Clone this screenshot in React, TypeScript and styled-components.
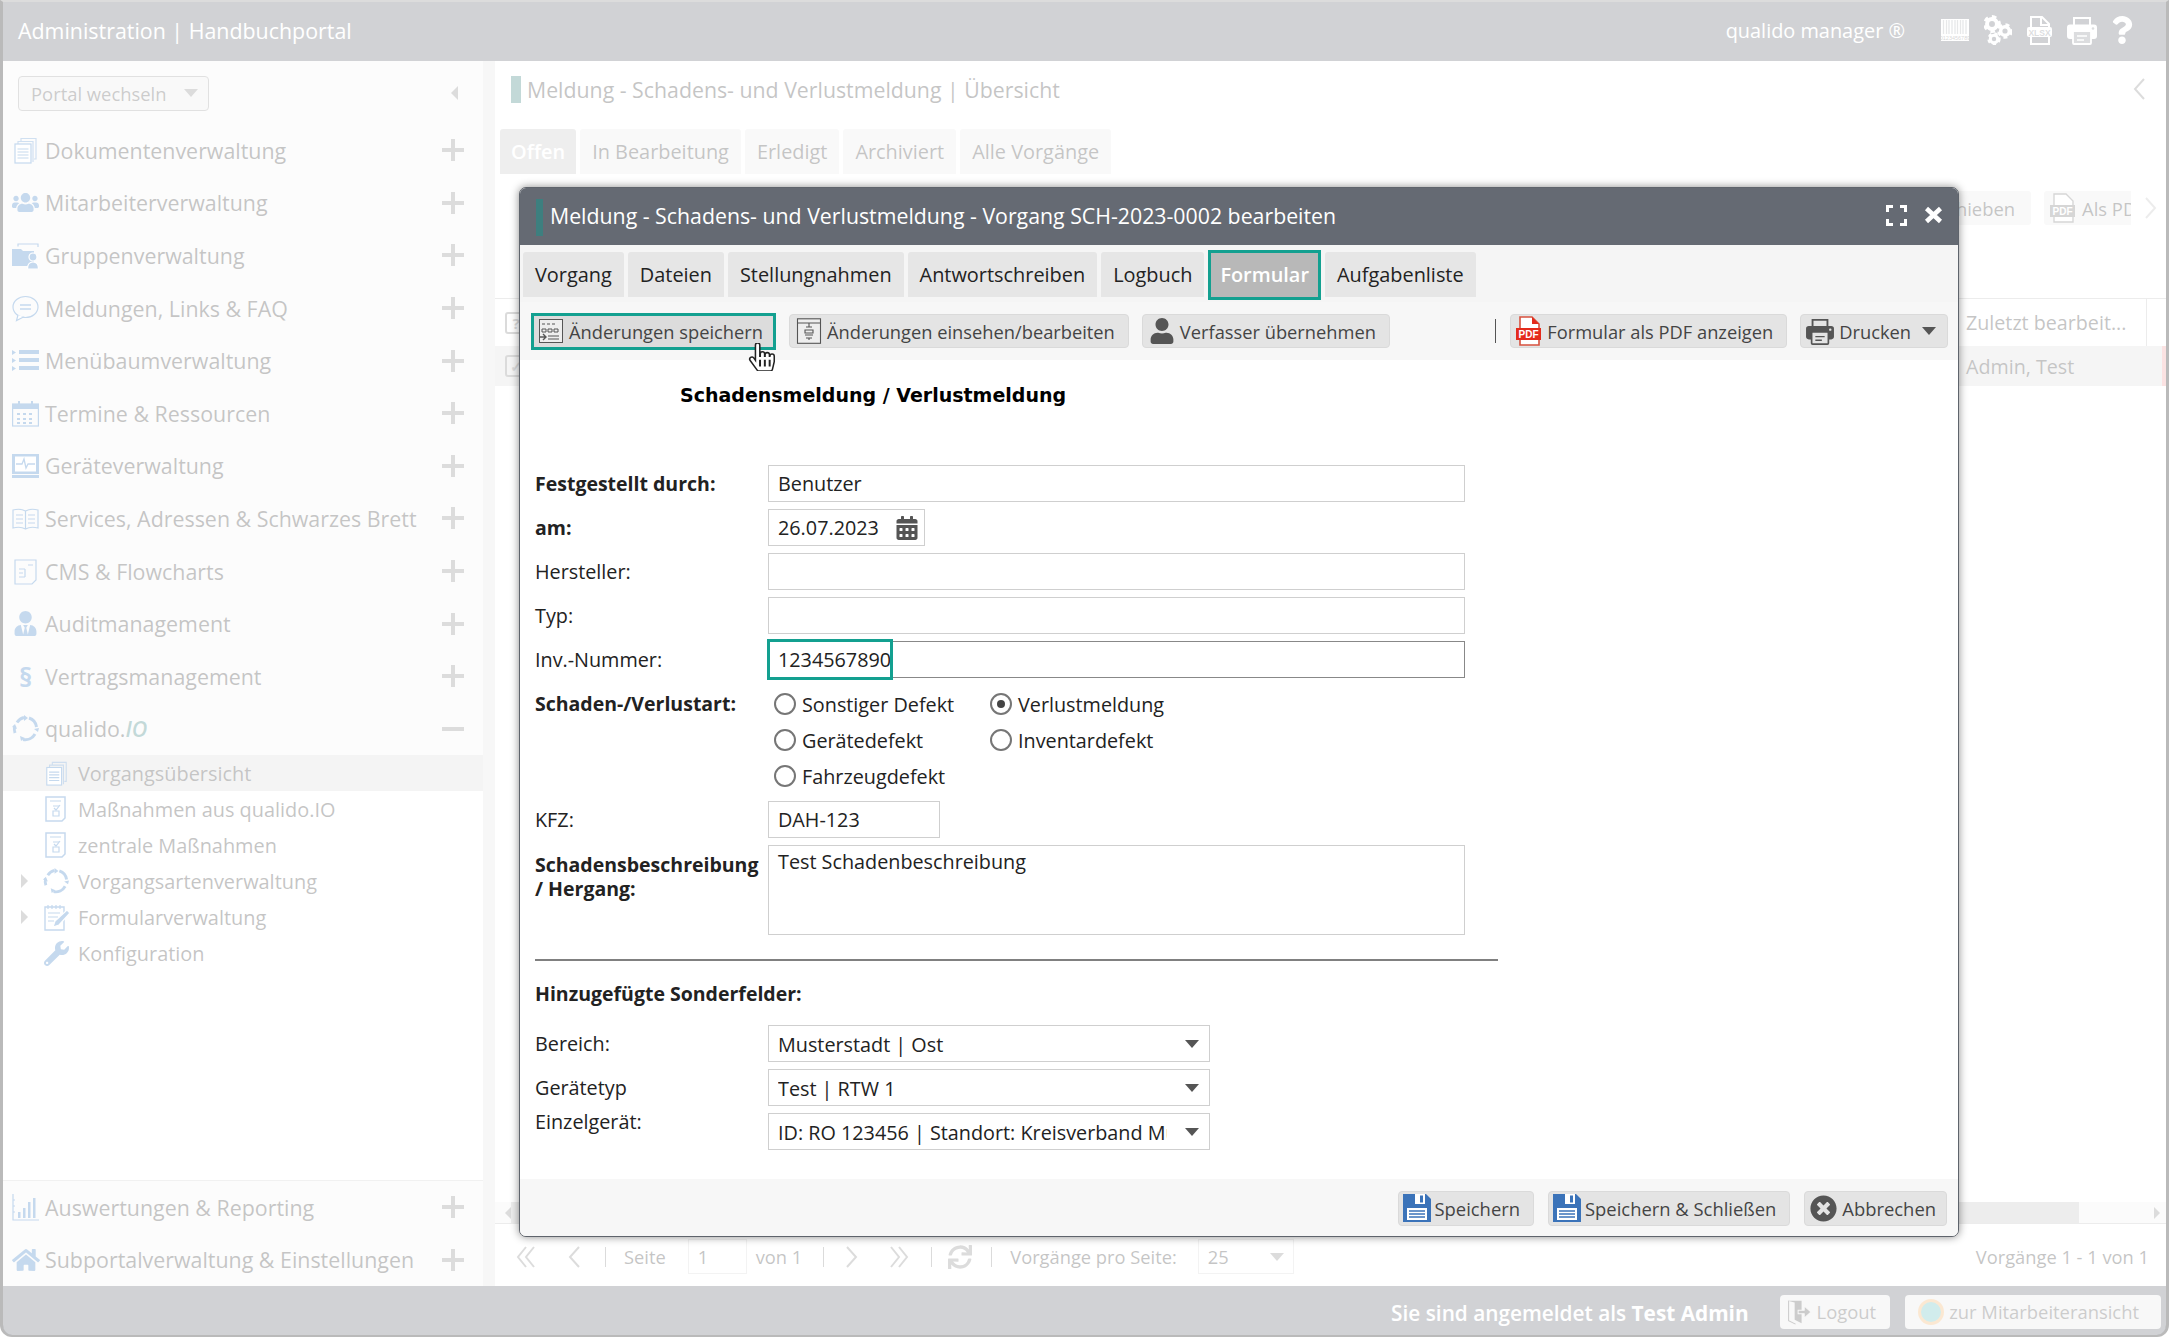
import React from "react";
import styled, { createGlobalStyle } from "styled-components";
import { FaUsers, FaUserTie, FaHome, FaWrench, FaQuestion, FaCalendarAlt, FaUser, FaTimesCircle, FaSync, FaHandPointer } from "react-icons/fa";

const Global = createGlobalStyle`
  html, body { margin: 0; padding: 0; width: 2169px; height: 1337px; overflow: hidden; background: #fff; }
  body { font-family: "Open Sans", "Liberation Sans", sans-serif; color: #3c3c3c; }
  * { box-sizing: border-box; }
  svg { flex: none; }
  #root { width: 2169px; height: 1337px; }
`;

const BLUE = "#3f80c6";

const Frame = styled.div`
  position: relative; width: 2169px; height: 1337px; display: flex; flex-direction: column;
  border: solid #bababa; border-width: 2px 3px 2px 3px; border-top-color: #dcdcdc;
  border-radius: 0 0 12px 12px; overflow: hidden; background: #fff;
`;
const Dim = styled.div`position: absolute; inset: 0; background: rgba(255,255,255,.7); z-index: 10;`;

const TopBar = styled.header`
  height: 59px; flex: none; background: #656a73; color: #fff; display: flex; align-items: center; padding: 0 30px 3px 15px; font-size: 21.4px;
`;
const TopTitle = styled.div`flex: 1;`;
const TopBrand = styled.div`font-size: 19.9px; margin-right: 36px;`;
const TopIcons = styled.div`display: flex; align-items: center; gap: 15px; color: #fff;`;
const TopHelp = styled.span`display: flex; margin-left: -4px;`;

const Body = styled.div`flex: 1; display: flex; min-height: 0;`;

const Sidebar = styled.aside`width: 480px; flex: none; display: flex; flex-direction: column; background: #fff;`;
const SideTop = styled.div`background: #f5f5f5; flex: none;`;
const PortalRow = styled.div`height: 63px; display: flex; align-items: flex-start; justify-content: space-between; padding: 15px 25px 0 15px;`;
const PortalSelect = styled.div`
  width: 191px; height: 35px; border: 1px solid #9c9c9c; border-radius: 4px; background: #ececec; display: flex; align-items: center;
  justify-content: space-between; padding: 0 10px 1px 12px; font-size: 18.4px; color: #555;
`;
const TriDown = styled.span<{ $c?: string; $w?: number }>`
  display: inline-block; width: 0; height: 0; flex: none;
  border-left: ${p => p.$w ?? 7}px solid transparent; border-right: ${p => p.$w ?? 7}px solid transparent;
  border-top: ${p => (p.$w ?? 7) + 1}px solid ${p => p.$c ?? "#555"};
`;
const TriSide = styled.span<{ $dir: "l" | "r"; $c?: string; $h?: number }>`
  display: inline-block; width: 0; height: 0; flex: none;
  border-top: ${p => p.$h ?? 7}px solid transparent; border-bottom: ${p => p.$h ?? 7}px solid transparent;
  ${p => (p.$dir === "l" ? "border-right" : "border-left")}: ${p => p.$h ?? 7}px solid ${p => p.$c ?? "#8a8a8a"};
`;
const CollapseMark = styled.div`margin-top: 7px;`;

const MenuRow = styled.div`
  height: 52.6px; display: flex; align-items: center; padding: 0 19px 0 9px; font-size: 21.4px; color: #3c3c3c; white-space: nowrap;
`;
const MenuIcon = styled.span`width: 27px; height: 27px; flex: none; display: flex; align-items: center; justify-content: center; color: ${BLUE}; margin-right: 6px;`;
const ParaGlyph = styled.span`font-size: 27px; font-weight: 700; color: ${BLUE}; line-height: 27px;`;
const Ital = styled.i`color: #37807d; font-weight: 600;`;
const Expander = styled.span`margin-left: auto; width: 22px; height: 22px; position: relative; flex: none; color: #8a8a8a;
  &::before { content: ""; position: absolute; left: 0; right: 0; top: 9px; height: 4px; background: currentColor; }
`;
const ExpanderPlus = styled(Expander)`
  &::after { content: ""; position: absolute; top: 0; bottom: 0; left: 9px; width: 4px; background: currentColor; }
`;

const SubInner = styled.div`background: #fff;`;
const SubRow = styled.div<{ $sel?: boolean }>`
  height: 36px; display: flex; align-items: center; font-size: 19.9px; padding-left: 18px; color: #3c3c3c; background: ${p => (p.$sel ? "#dadada" : "#fff")};
`;
const SubCaret = styled.span`width: 21px; flex: none; display: flex;`;
const SubIcon = styled.span`width: 28px; height: 26px; flex: none; display: flex; align-items: center; justify-content: center; color: ${BLUE}; margin-right: 8px;`;

const SideSpacer = styled.div`flex: 1;`;
const SideBottom = styled.div`flex: none; background: #f5f5f5; border-top: 1px solid #d0d0d0;`;

const Splitter = styled.div`width: 12px; flex: none; background: #e4e4e4;`;

const Main = styled.main`flex: 1; min-width: 0; display: flex; flex-direction: column; background: #fff;`;
const TitleRow = styled.div`height: 68px; flex: none; display: flex; align-items: center; padding: 0 20px 12px 16px; font-size: 21.3px; color: #3c3c3c;`;
const TitleAccent = styled.span`width: 10px; height: 27px; background: #37807d; margin-right: 6px; flex: none;`;
const TitleText = styled.span`flex: 1;`;
const BackTabs = styled.div`display: flex; gap: 4px; padding-left: 5px; height: 45px; flex: none;`;
const BackTab = styled.div<{ $on?: boolean }>`
  padding: 0 ${p => (p.$on ? 11 : 12)}px; display: flex; align-items: center; font-size: 19.9px; font-weight: ${p => (p.$on ? 600 : 400)};
  color: ${p => (p.$on ? "#fff" : "#3c3c3c")}; background: ${p => (p.$on ? "#c6c6c6" : "#ebebeb")}; border-radius: 3px 3px 0 0;
`;
const BackActions = styled.div`margin-top: 17px; height: 34px; flex: none; display: flex; justify-content: flex-end; align-items: center; gap: 13px; padding-right: 8px;`;
const BackBtn = styled.div`height: 34px; width: max-content; flex: none; display: flex; align-items: center; gap: 6px; padding: 0 16px 0 6px; background: #ebebeb; font-size: 18.4px; color: #3c3c3c; border-radius: 3px; white-space: nowrap;`;
const BackClip = styled.div`width: 87px; overflow: hidden; flex: none;`;
const BackNext = styled.span`width: 14px; display: flex; color: #c0c0c0;`;
const THead = styled.div`margin-top: 73px; height: 48px; flex: none; display: flex; align-items: center; border-top: 1px solid #c0c0c0; padding-left: 10px; font-size: 19.7px;`;
const TRow = styled.div`height: 40px; flex: none; display: flex; align-items: center; background: #dedede; padding-left: 10px; font-size: 19.7px;`;
const CheckBox = styled.span`width: 22px; height: 22px; border: 2px solid #888; border-radius: 3px; color: #888; font-size: 15px; font-weight: 700; display: flex; align-items: center; justify-content: center; flex: none;`;
const LastCell = styled.div`margin-left: auto; width: 200px; height: 100%; display: flex; align-items: center; white-space: nowrap; position: relative;`;
const CellRule = styled.span`position: absolute; top: 0; bottom: 0; left: 180px; width: 1px; background: #c0c0c0;`;
const PinkMark = styled.span`position: absolute; top: 0; bottom: 0; right: 0; width: 4px; background: #f19e9e;`;
const BackSpacer = styled.div`flex: 1;`;
const HScroll = styled.div`height: 22px; flex: none; display: flex; align-items: center; background: #f0f0f0; border-bottom: 1px solid #c0c0c0; padding: 0 6px 0 10px;`;
const HScrollThumb = styled.div`height: 21px; width: 1568px; background: #c4c4c4; flex: none;`;
const Pager = styled.div`height: 62px; flex: none; display: flex; align-items: center; padding: 3px 17px 0 21px; font-size: 18.3px; color: #3c3c3c; white-space: nowrap;`;
const PagerIco = styled.span<{ $ml?: number }>`display: flex; margin-left: ${p => p.$ml ?? 0}px; color: #8a8a8a; flex: none;`;
const PagerSep = styled.span<{ $ml: number }>`width: 1px; height: 20px; background: #888; margin-left: ${p => p.$ml}px; flex: none;`;
const PagerTxt = styled.span<{ $ml: number }>`margin-left: ${p => p.$ml}px;`;
const PagerField = styled.div<{ $ml: number; $w: number }>`
  margin-left: ${p => p.$ml}px; width: ${p => p.$w}px; height: 35px; border: 1px solid #d6d6d6; background: #fff; display: flex; align-items: center; justify-content: space-between; padding: 0 9px; flex: none;
`;
const PagerRight = styled.span`margin-left: auto;`;

const BottomBar = styled.footer`
  height: 49px; flex: none; background: #656a73; color: #fff; display: flex; align-items: center; justify-content: flex-end; padding: 2px 5px 0 0; font-size: 20.8px; font-weight: 600;
`;
const BottomMsg = styled.span`margin-top: 2px;`;
const BottomStrong = styled.b`font-weight: 700;`;
const BottomBtn = styled.div<{ $ml: number; $pl: number; $pr: number }>`
  height: 34px; margin-left: ${p => p.$ml}px; background: #e6e6e6; border-radius: 4px; display: flex; align-items: center; gap: 5px; padding: 0 ${p => p.$pr}px 0 ${p => p.$pl}px; font-size: 18.4px; font-weight: 400; color: #555;
`;
const StatusDot = styled.span`width: 26px; height: 26px; border-radius: 50%; border: 3px solid #f2b36a; background: #64c0c0; flex: none;`;

/* Modal */
const Modal = styled.section`
  position: absolute; left: 516px; top: 185px; width: 1440px; height: 1050px; z-index: 20; background: #fff; display: flex; flex-direction: column;
  border-radius: 7px; border: 1px solid #5f646c; box-shadow: 0 0 9px rgba(0,0,0,.45); overflow: hidden; color: #222;
`;
const ModalHead = styled.div`height: 57px; flex: none; background: #656a73; color: #fff; display: flex; align-items: center; padding: 0 15px 0 16px; font-size: 21.3px;`;
const HeadAccent = styled.span`width: 7px; height: 37px; background: #3d7f7f; margin-right: 7px; flex: none; margin-top: 1px;`;
const HeadTitle = styled.span`flex: 1; font-weight: 500; margin-bottom: 3px;`;
const HeadTools = styled.div`display: flex; align-items: center; gap: 17px; margin-bottom: 3px;`;
const ModalTabs = styled.div`height: 57px; flex: none; background: #f5f5f5; display: flex; align-items: center; gap: 4px; padding: 2px 0 0 3px;`;
const ModalTab = styled.div<{ $on?: boolean }>`
  height: ${p => (p.$on ? 50 : 45)}px; padding: 0 ${p => (p.$on ? 9 : 12)}px; display: flex; align-items: center; font-size: 19.9px; white-space: nowrap;
  background: ${p => (p.$on ? "#b8b8b8" : "#e6e6e6")}; color: ${p => (p.$on ? "#fff" : "#222")}; font-weight: ${p => (p.$on ? 600 : 400)};
  border: ${p => (p.$on ? "3px solid #13a090" : "0")}; border-radius: ${p => (p.$on ? 0 : "3px 3px 0 0")};
`;
const ModalTools = styled.div`height: 58px; flex: none; background: #f7f7f7; display: flex; align-items: center; gap: 13px; padding: 0 10px 0 11px;`;
const ToolBtn = styled.div<{ $active?: boolean; $pl?: number; $pr?: number }>`
  position: relative; height: ${p => (p.$active ? 37 : 34)}px; display: flex; align-items: center; gap: 5px;
  padding: 0 ${p => p.$pr ?? (p.$active ? 10 : 13)}px 0 ${p => p.$pl ?? 4}px; font-size: 18.3px; color: #444; white-space: nowrap; flex: none;
  background: ${p => (p.$active ? "#dcdcdc" : "#e4e4e4")}; border: ${p => (p.$active ? "3px solid #13a090" : "1px solid #dadada")}; border-radius: ${p => (p.$active ? 0 : 4)}px;
`;
const ToolSep = styled.span`width: 1px; height: 24px; background: #555; margin-left: auto; margin-right: 1px; flex: none;`;
const HandCursor = styled.span`position: absolute; left: 214px; top: 27px; display: flex; z-index: 2;`;
const DruckenArrow = styled.span`display: flex; margin-left: 6px;`;

const FormArea = styled.div`flex: 1; min-height: 0; padding: 0 16px; overflow: hidden;`;
const FormHeading = styled.h2`margin: 21px 0 0 144px; height: 28px; font-size: 19px; line-height: 28px; font-weight: 700; color: #000; font-family: "DejaVu Sans", sans-serif; white-space: nowrap;`;
const FormGrid = styled.div`margin-top: 56px; display: grid; grid-template-columns: 232px 1fr; row-gap: 7px;`;
const Label = styled.label<{ $b?: boolean; $top?: number }>`
  font-size: ${p => (p.$b ? 19.5 : 19.8)}px; font-weight: ${p => (p.$b ? 700 : 400)}; color: #222; line-height: 24px; align-self: ${p => (p.$top != null ? "start" : "center")};
  margin: ${p => p.$top ?? 0}px 0 0 -1px; white-space: nowrap;
`;
const Field = styled.div<{ $w: number; $h?: number; $dark?: boolean; $tall?: boolean }>`
  position: relative; width: ${p => p.$w}px; height: ${p => p.$h ?? 37}px; border: 1px solid ${p => (p.$dark ? "#888" : "#cfcfcf")}; background: #fff;
  font-size: 19.8px; line-height: 24px; color: #222; display: flex; align-items: ${p => (p.$tall ? "flex-start" : "center")}; padding: ${p => (p.$tall ? "4px 9px" : "1px 9px 0")}; white-space: nowrap;
`;
const DateIcon = styled.span`margin-left: auto; margin-right: -4px; display: flex; color: #555;`;
const FocusBox = styled.span`position: absolute; left: -2px; top: -3px; width: 126px; height: 41px; border: 3px solid #13a090;`;
const RadioGrid = styled.div`height: 109px; display: grid; grid-template-columns: 216px 216px; grid-auto-rows: 36px; padding: 1px 0 0 6px;`;
const RadioItem = styled.div`display: flex; align-items: center; gap: 6px; font-size: 19.8px; color: #222;`;
const RadioDot = styled.span<{ $on?: boolean }>`
  width: 22px; height: 22px; border-radius: 50%; border: 2px solid #767676; flex: none; position: relative; background: #fff;
  &::after { content: ""; display: ${p => (p.$on ? "block" : "none")}; position: absolute; left: 5px; top: 5px; width: 8px; height: 8px; border-radius: 50%; background: #444; }
`;
const Rule = styled.hr`margin: 24px 0 0 -1px; width: 963px; height: 2px; border: 0; background: #808080;`;
const SectionHead = styled.h3`margin: 21px 0 0 -1px; font-size: 19.5px; line-height: 24px; font-weight: 700; color: #222;`;
const SelectGrid = styled.div`margin-top: 19px; display: grid; grid-template-columns: 232px 1fr; row-gap: 7px;`;
const SelectBox = styled.div`
  width: 442px; height: 37px; border: 1px solid #cfcfcf; background: #fff; font-size: 19.8px; color: #222; display: flex; align-items: center; padding: 1px 10px 0 9px; white-space: nowrap;
`;
const SelectText = styled.span`flex: 1; overflow: hidden; margin-right: 18px;`;

const ModalFoot = styled.div`height: 57px; flex: none; background: #f7f7f7; display: flex; align-items: center; justify-content: flex-end; gap: 14px; padding: 1px 11px 0 0;`;
const FootBtn = styled.div<{ $pl?: number; $gap?: number; $pr?: number }>`
  height: 35px; display: flex; align-items: center; gap: ${p => p.$gap ?? 4}px; padding: 0 ${p => p.$pr ?? 13}px 0 ${p => p.$pl ?? 4}px; font-size: 18.4px; color: #444; background: #e4e4e4; border: 1px solid #dadada; border-radius: 4px; white-space: nowrap; flex: none;
`;
const BlueIcon = styled.span`display: flex; color: #3b73b9;`;
const DarkIcon = styled.span`display: flex; color: #555;`;

/* Icon drawings */
const Svg: React.FC<{ w?: number; h?: number; vb?: string; children: React.ReactNode }> = ({ w = 27, h = 27, vb, children }) => (
  <svg width={w} height={h} viewBox={vb ?? `0 0 ${w} ${h}`} fill="none" stroke="currentColor" strokeWidth={1.2}>{children}</svg>
);
const Docs = ({ s = 27 }: { s?: number }) => (
  <Svg w={s} h={s} vb="0 0 27 27">
    <path d="M9 4V1.5h15V22h-2M6 7V4.5h15V25" opacity=".8" />
    <rect x="3" y="7" width="16" height="19" fill="#fff" />
    <path d="M5.5 12h11M5.5 15h11M5.5 18h11M5.5 21h11" />
  </Svg>
);
const Bubble = () => (
  <Svg><ellipse cx="13.5" cy="12" rx="12.5" ry="10.5" /><path d="M6 20l-1.5 5.5 7-3.5" fill="#fff" /><path d="M8 10h11M8 14h11" strokeWidth="1.6" /></Svg>
);
const FolderPerson = () => (
  <Svg>
    <path d="M0 7h9l2 2h11v15H0z" fill="currentColor" stroke="none" />
    <path d="M6 4.500V2h20v3" />
    <circle cx="21" cy="15" r="4" fill="currentColor" stroke="#fff" />
    <path d="M15.500 27c0-5 2-7 5.500-7s5.500 2 5.500 7z" fill="currentColor" stroke="#fff" />
  </Svg>
);
const ListI = () => (
  <Svg>
    <path d="M0 3l4 2.500-4 2.500zM0 11l4 2.500-4 2.500zM0 19l4 2.500-4 2.500z" fill="currentColor" stroke="none" />
    <path d="M7 3h20v4H7zM7 11h20v4H7zM7 19h20v4H7z" fill="currentColor" stroke="none" />
  </Svg>
);
const Cal = () => (
  <Svg>
    <path d="M0 4h27v5H0z" fill="currentColor" stroke="none" />
    <rect x=".6" y="4" width="25.800" height="22" />
    <path d="M7 1v6M20 1v6" strokeWidth="2" />
    <path d="M5 14h3M11 14h3M17 14h3M5 19h3M11 19h3M17 19h3M5 23h3M11 23h3M17 23h3" strokeWidth="2" />
  </Svg>
);
const Monitor = () => (
  <Svg>
    <path d="M0 2h27v20H0zM0 23h27v3H0z" fill="currentColor" stroke="none" />
    <rect x="3" y="4.500" width="21" height="15" fill="#fff" stroke="none" />
    <path d="M4 12h6l2-5 2 9 2-4h7" strokeWidth="1.300" />
  </Svg>
);
const Book = () => (
  <Svg>
    <path d="M13.500 6C10 4 5 4 1 5v18c4-1 9-1 12.500 1 3.500-2 8.500-2 12.500-1V5c-4-1-9-1-12.500 1zM13.500 6v18" />
    <path d="M4 10h7M4 14h7M4 18h7M16 10h7M16 14h7M16 18h7" />
  </Svg>
);
const Flow = () => (
  <Svg>
    <path d="M3 2h21v20l-4 4H3z" />
    <path d="M7 11h6M7 15h4M7 19h6M16 7h5M13 11v8" />
  </Svg>
);
const Cycle = ({ s = 27 }: { s?: number }) => (
  <Svg w={s} h={s} vb="0 0 27 27">
    <g strokeWidth="3">
      <path d="M5 7.500A11 11 0 0 1 12 2.500" />
      <path d="M17 3A11 11 0 0 1 24.500 12" />
      <path d="M23 19A11 11 0 0 1 11 24.500" />
      <path d="M3 18A11 11 0 0 1 2.800 11" />
    </g>
    <path d="M12 0l4 3-4 3zM26 17l-4-3 5-1zM9 26l-1-5 5 2zM0 12l3-3 2 5z" fill="currentColor" stroke="none" />
  </Svg>
);
const Chart = () => (
  <Svg>
    <path d="M1 0v26h26M1 6h2M1 12h2M1 18h2" />
    <path d="M6 18h2.500v6H6zM11 14h2.500v10H11zM16 8h2.500v16H16zM21 4h2.500v20H21z" fill="currentColor" stroke="none" />
  </Svg>
);
const CheckDoc = () => (
  <Svg w={22} h={26}>
    <path d="M1 1h19v21l-3 3H1z" strokeWidth="1.500" />
    <path d="M5 5h11M8 10h6M8 15h6v5H8z" />
    <path d="M9 12l2 2 4-5" />
  </Svg>
);
const FormPen = () => (
  <Svg>
    <path d="M2 3h19v23H2z" strokeWidth="1.400" />
    <path d="M5 1v4M9 1v4M13 1v4M17 1v4M5 9h12M5 13h10M5 17h6" />
    <path d="M10 23l2-6L24 6l3 3-11 12z" fill="currentColor" stroke="#fff" />
  </Svg>
);
const Barcode = () => (
  <Svg w={28} h={22}>
    <rect x="0" y="0" width="28" height="22" fill="#fff" stroke="none" />
    <path d="M2.500 1v14M5.500 1v14M8 1v14M11 1v14M14 1v14M16.500 1v14M19.500 1v14M22 1v14M25 1v14" stroke="#aeb1b6" strokeWidth="1.300" />
    <text x="14" y="21" textAnchor="middle" fontSize="5.500" fill="#777" stroke="none" fontFamily="Liberation Sans">0123456789</text>
  </Svg>
);
const Gear = ({ x, y, r }: { x: number; y: number; r: number }) => (
  <g>
    <circle cx={x} cy={y} r={r * 0.62} strokeWidth={r * 0.5} />
    <circle cx={x} cy={y} r={r * 0.9} strokeWidth={r * 0.42} strokeDasharray={`${r * 0.55} ${r * 0.5}`} />
  </g>
);
const Gears = () => (
  <Svg w={28} h={30}>
    <Gear x={8} y={9} r={8} />
    <Gear x={21} y={16} r={7} />
    <Gear x={10} y={24} r={6} />
  </Svg>
);
const Xlsx = () => (
  <Svg w={25} h={29}>
    <path d="M4 1h11l7 7v20H4z" strokeWidth="2" />
    <path d="M14 1v8h8" strokeWidth="2" />
    <rect x="0" y="11" width="25" height="10" rx="2" fill="currentColor" stroke="none" />
    <text x="12.500" y="19.500" textAnchor="middle" fontSize="8.500" fontWeight="700" fill="#8a8d93" stroke="none" fontFamily="Liberation Sans">XLSX</text>
  </Svg>
);
const Printer = ({ paper, w = 30, h = 29 }: { paper: string; w?: number; h?: number }) => (
  <Svg w={w} h={h} vb="0 0 30 29">
    <path d="M7 9V2h16v7" strokeWidth="2" />
    <rect x="0" y="8.500" width="30" height="14.500" rx="3" fill="currentColor" stroke="none" />
    <rect x="6" y="15" width="18" height="13" rx="1" fill={paper} stroke="currentColor" strokeWidth="1.800" />
    <path d="M10 20h10M10 24h7" strokeWidth="1.600" />
    <circle cx="26" cy="12.500" r="1.300" fill={paper} stroke="none" />
  </Svg>
);
const Expand = () => (
  <Svg w={21} h={21}>
    <path d="M1.500 7V1.500H7M14 1.500h5.500V7M19.500 14v5.500H14M7 19.500H1.500V14" strokeWidth="3" />
  </Svg>
);
const CloseX = () => (
  <Svg w={19} h={18}>
    <path d="M2.500 2.500l14 13M16.500 2.500l-14 13" strokeWidth="4.500" />
  </Svg>
);
const SaveDoc = () => <Svg w={28} h={28}>
  <path d="M0 0h23l5 5v23H0z" fill="currentColor" stroke="none" />
  <path d="M12 0h10v10H12z" fill="#fff" stroke="none" />
  <path d="M17 1.500h3v7h-3z" fill="currentColor" stroke="none" />
  <path d="M4 14h20v12H4z" fill="#fff" stroke="none" />
  <path d="M6 17h16M6 20h16M6 23h16" strokeWidth="1.400" />
</Svg>;
const SaveForm = () => (
  <Svg w={26} h={26}>
    <g stroke="#555" strokeWidth="1">
      <rect x="1.500" y="1.500" width="23" height="23" fill="#eee" />
      <path d="M4 6h3M9 6h3M14 6h3M4 11h4v3H4zM10 11h4v3h-4zM16 11h4v3h-4zM10 18h11M10 21h11" />
      <path d="M1 19h7M5 16l3 3-3 3" strokeWidth="1.400" />
    </g>
  </Svg>
);
const ReviewDoc = () => (
  <Svg w={26} h={26}>
    <g stroke="#555" strokeWidth="1.100">
      <rect x="1.500" y=".8" width="23" height="24.500" fill="#eee" />
      <path d="M1.500 5h23M10 9h6M9 12h8v3H9zM9 17h8M13 5v4M13 20v2M10 20h6" />
    </g>
  </Svg>
);
const PdfIcon = () => (
  <Svg w={26} h={30}>
    <path d="M4 1h12l7 7v21H4z" fill="#fff" stroke="#d7523f" strokeWidth="1.600" />
    <path d="M16 1v7h7z" fill="#e42b1c" stroke="none" />
    <rect x="0" y="12" width="25" height="12" fill="#e42b1c" stroke="none" />
    <text x="12.500" y="22" textAnchor="middle" fontSize="10" fontWeight="700" fill="#fff" stroke="none" fontFamily="Liberation Sans">PDF</text>
  </Svg>
);
const PdfGrey = () => (
  <Svg w={26} h={30}>
    <path d="M4 1h12l7 7v21H4z" fill="#fff" stroke="#777" strokeWidth="1.400" />
    <rect x="0" y="12" width="25" height="12" fill="#777" stroke="none" />
    <text x="12.500" y="22" textAnchor="middle" fontSize="10" fontWeight="700" fill="#fff" stroke="none" fontFamily="Liberation Sans">PDF</text>
  </Svg>
);
const Chev = ({ d, dbl }: { d: "l" | "r"; dbl?: boolean }) => (
  <Svg w={dbl ? 20 : 14} h={24}>
    {d === "l" ? (
      dbl ? <path d="M10 2L2 12l8 10M18 2l-8 10 8 10" strokeWidth="2" /> : <path d="M12 2L3 12l9 10" strokeWidth="2" />
    ) : dbl ? <path d="M2 2l8 10-8 10M10 2l8 10-8 10" strokeWidth="2" /> : <path d="M2 2l9 10-9 10" strokeWidth="2" />}
  </Svg>
);
const Door = () => (
  <Svg w={26} h={28} vb="0 0 30 30">
    <path d="M2 2h16v26l-8-4V4z" fill="currentColor" stroke="none" />
    <path d="M3 2v23l8 4" />
    <path d="M14 13h7V8l8 7-8 7v-5h-7z" fill="currentColor" stroke="#e6e6e6" />
  </Svg>
);

const mainMenu: [string, React.ReactNode][] = [
  ["Dokumentenverwaltung", <Docs />],
  ["Mitarbeiterverwaltung", <FaUsers size={27} />],
  ["Gruppenverwaltung", <FolderPerson />],
  ["Meldungen, Links & FAQ", <Bubble />],
  ["Menübaumverwaltung", <ListI />],
  ["Termine & Ressourcen", <Cal />],
  ["Geräteverwaltung", <Monitor />],
  ["Services, Adressen & Schwarzes Brett", <Book />],
  ["CMS & Flowcharts", <Flow />],
  ["Auditmanagement", <FaUserTie size={25} />],
  ["Vertragsmanagement", <ParaGlyph>§</ParaGlyph>],
];

const subMenu: { t: string; i: React.ReactNode; sel?: boolean; caret?: boolean }[] = [
  { t: "Vorgangsübersicht", i: <Docs s={25} />, sel: true },
  { t: "Maßnahmen aus qualido.IO", i: <CheckDoc /> },
  { t: "zentrale Maßnahmen", i: <CheckDoc /> },
  { t: "Vorgangsartenverwaltung", i: <Cycle s={26} />, caret: true },
  { t: "Formularverwaltung", i: <FormPen />, caret: true },
  { t: "Konfiguration", i: <FaWrench size={25} /> },
];

const modalTabs = ["Vorgang", "Dateien", "Stellungnahmen", "Antwortschreiben", "Logbuch", "Formular", "Aufgabenliste"];

export default function App() {
  return (
    <>
      <Global />
      <Frame>
        <TopBar>
          <TopTitle>Administration | Handbuchportal</TopTitle>
          <TopBrand>qualido manager ®</TopBrand>
          <TopIcons>
            <Barcode />
            <Gears />
            <Xlsx />
            <Printer paper="#8a8d93" />
            <TopHelp><FaQuestion size={28} /></TopHelp>
          </TopIcons>
        </TopBar>
        <Body>
          <Sidebar>
            <SideTop>
              <PortalRow>
                <PortalSelect>Portal wechseln <TriDown $c="#8a8a8a" /></PortalSelect>
                <CollapseMark><TriSide $dir="l" /></CollapseMark>
              </PortalRow>
              {mainMenu.map(([t, i]) => (
                <MenuRow key={t}>
                  <MenuIcon>{i}</MenuIcon>
                  {t}
                  <ExpanderPlus />
                </MenuRow>
              ))}
              <MenuRow>
                <MenuIcon><Cycle /></MenuIcon>
                qualido.<Ital>IO</Ital>
                <Expander />
              </MenuRow>
              <SubInner>
                {subMenu.map(s => (
                  <SubRow key={s.t} $sel={s.sel}>
                    <SubCaret>{s.caret && <TriSide $dir="r" $h={7} />}</SubCaret>
                    <SubIcon>{s.i}</SubIcon>
                    {s.t}
                  </SubRow>
                ))}
              </SubInner>
            </SideTop>
            <SideSpacer />
            <SideBottom>
              <MenuRow>
                <MenuIcon><Chart /></MenuIcon>
                Auswertungen & Reporting
                <ExpanderPlus />
              </MenuRow>
              <MenuRow>
                <MenuIcon><FaHome size={28} /></MenuIcon>
                Subportalverwaltung & Einstellungen
                <ExpanderPlus />
              </MenuRow>
            </SideBottom>
          </Sidebar>
          <Splitter />
          <Main>
            <TitleRow>
              <TitleAccent />
              <TitleText>Meldung - Schadens- und Verlustmeldung | Übersicht</TitleText>
              <PagerIco><Chev d="l" /></PagerIco>
            </TitleRow>
            <BackTabs>
              <BackTab $on>Offen</BackTab>
              <BackTab>In Bearbeitung</BackTab>
              <BackTab>Erledigt</BackTab>
              <BackTab>Archiviert</BackTab>
              <BackTab>Alle Vorgänge</BackTab>
            </BackTabs>
            <BackActions>
              <BackBtn>Verschieben</BackBtn>
              <BackClip>
                <BackBtn><PdfGrey />Als PDF anzeigen</BackBtn>
              </BackClip>
              <BackNext><Chev d="r" /></BackNext>
            </BackActions>
            <THead>
              <CheckBox>?</CheckBox>
              <LastCell>Zuletzt bearbeit...<CellRule /></LastCell>
            </THead>
            <TRow>
              <CheckBox>✓</CheckBox>
              <LastCell>Admin, Test<PinkMark /></LastCell>
            </TRow>
            <BackSpacer />
            <HScroll>
              <TriSide $dir="l" $h={6} />
              <HScrollThumb />
              <PagerRight><TriSide $dir="r" $h={6} /></PagerRight>
            </HScroll>
            <Pager>
              <PagerIco><Chev d="l" dbl /></PagerIco>
              <PagerIco $ml={31}><Chev d="l" /></PagerIco>
              <PagerSep $ml={24} />
              <PagerTxt $ml={18}>Seite</PagerTxt>
              <PagerField $ml={22} $w={59}>1</PagerField>
              <PagerTxt $ml={9}>von 1</PagerTxt>
              <PagerSep $ml={21} />
              <PagerIco $ml={21}><Chev d="r" /></PagerIco>
              <PagerIco $ml={30}><Chev d="r" dbl /></PagerIco>
              <PagerSep $ml={22} />
              <PagerIco $ml={16}><FaSync size={24} /></PagerIco>
              <PagerSep $ml={19} />
              <PagerTxt $ml={18}>Vorgänge pro Seite:</PagerTxt>
              <PagerField $ml={21} $w={96}>25 <TriDown $c="#8a8a8a" /></PagerField>
              <PagerRight>Vorgänge 1 - 1 von 1</PagerRight>
            </Pager>
          </Main>
        </Body>
        <BottomBar>
          <BottomMsg>Sie sind angemeldet als <BottomStrong>Test Admin</BottomStrong></BottomMsg>
          <BottomBtn $ml={31} $pl={6} $pr={14}><Door />Logout</BottomBtn>
          <BottomBtn $ml={15} $pl={13} $pr={22}><StatusDot />zur Mitarbeiteransicht</BottomBtn>
        </BottomBar>
        <Dim />
        <Modal>
          <ModalHead>
            <HeadAccent />
            <HeadTitle>Meldung - Schadens- und Verlustmeldung - Vorgang SCH-2023-0002 bearbeiten</HeadTitle>
            <HeadTools>
              <Expand />
              <CloseX />
            </HeadTools>
          </ModalHead>
          <ModalTabs>
            {modalTabs.map(t => <ModalTab key={t} $on={t === "Formular"}>{t}</ModalTab>)}
          </ModalTabs>
          <ModalTools>
            <ToolBtn $active>
              <SaveForm />Änderungen speichern
              <HandCursor><FaHandPointer size={28} color="#fff" stroke="#222" strokeWidth={28} /></HandCursor>
            </ToolBtn>
            <ToolBtn $pl={6}><ReviewDoc />Änderungen einsehen/bearbeiten</ToolBtn>
            <ToolBtn $pl={6}><DarkIcon><FaUser size={26} /></DarkIcon>Verfasser übernehmen</ToolBtn>
            <ToolSep />
            <ToolBtn $pl={5}><PdfIcon />Formular als PDF anzeigen</ToolBtn>
            <ToolBtn $pl={5} $pr={11}><DarkIcon><Printer paper="#e4e4e4" w={28} h={27} /></DarkIcon>Drucken <DruckenArrow><TriDown /></DruckenArrow></ToolBtn>
          </ModalTools>
          <FormArea>
            <FormHeading>Schadensmeldung / Verlustmeldung</FormHeading>
            <FormGrid>
              <Label $b>Festgestellt durch:</Label>
              <Field $w={697}>Benutzer</Field>
              <Label $b>am:</Label>
              <Field $w={157}>26.07.2023<DateIcon><FaCalendarAlt size={24} /></DateIcon></Field>
              <Label>Hersteller:</Label>
              <Field $w={697} />
              <Label>Typ:</Label>
              <Field $w={697} />
              <Label>Inv.-Nummer:</Label>
              <Field $w={697} $dark>1234567890<FocusBox /></Field>
              <Label $b $top={7}>Schaden-/Verlustart:</Label>
              <RadioGrid>
                <RadioItem><RadioDot />Sonstiger Defekt</RadioItem>
                <RadioItem><RadioDot $on />Verlustmeldung</RadioItem>
                <RadioItem><RadioDot />Gerätedefekt</RadioItem>
                <RadioItem><RadioDot />Inventardefekt</RadioItem>
                <RadioItem><RadioDot />Fahrzeugdefekt</RadioItem>
              </RadioGrid>
              <Label>KFZ:</Label>
              <Field $w={172}>DAH-123</Field>
              <Label $b $top={8}>Schadensbeschreibung<br />/ Hergang:</Label>
              <Field $w={697} $h={90} $tall>Test Schadenbeschreibung</Field>
            </FormGrid>
            <Rule />
            <SectionHead>Hinzugefügte Sonderfelder:</SectionHead>
            <SelectGrid>
              <Label>Bereich:</Label>
              <SelectBox><SelectText>Musterstadt | Ost</SelectText><TriDown /></SelectBox>
              <Label>Gerätetyp</Label>
              <SelectBox><SelectText>Test | RTW 1</SelectText><TriDown /></SelectBox>
              <Label $top={-3}>Einzelgerät:</Label>
              <SelectBox><SelectText>ID: RO 123456 | Standort: Kreisverband Musterstadt</SelectText><TriDown /></SelectBox>
            </SelectGrid>
          </FormArea>
          <ModalFoot>
            <FootBtn><BlueIcon><SaveDoc /></BlueIcon>Speichern</FootBtn>
            <FootBtn><BlueIcon><SaveDoc /></BlueIcon>Speichern & Schließen</FootBtn>
            <FootBtn $pl={5} $gap={5} $pr={10}><DarkIcon><FaTimesCircle size={27} /></DarkIcon>Abbrechen</FootBtn>
          </ModalFoot>
        </Modal>
      </Frame>
    </>
  );
}
